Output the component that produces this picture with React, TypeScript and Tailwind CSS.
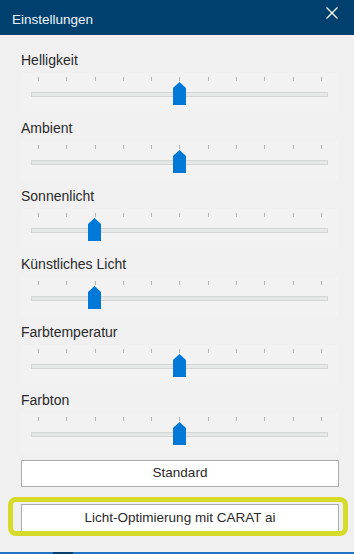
import React from 'react';

// Einstellungs-Slider
interface SliderItem {
  label: string;
  value: number; // 0..1
}

const sliders: SliderItem[] = [
  { label: 'Helligkeit', value: 0.5 },
  { label: 'Ambient', value: 0.5 },
  { label: 'Sonnenlicht', value: 0.2 },
  { label: 'Künstliches Licht', value: 0.2 },
  { label: 'Farbtemperatur', value: 0.5 },
  { label: 'Farbton', value: 0.5 },
];

const font = { fontFamily: '"Liberation Sans", Arial, sans-serif' };

const Slider = ({ item }: { item: SliderItem }) => {
  return (
    <div className="h-[68px] flex flex-col">
      <div className="h-[22px] text-[14px] leading-[17px] text-[#2a2a2a] pt-px">{item.label}</div>
      <div className="relative h-[39px] w-[317px] bg-[#f2f2f2]">
        {/* Ticks */}
        <div className="absolute left-[17px] top-[4px] w-[284px] h-[4px] flex justify-between">
          {Array.from({ length: 11 }).map((_, i) => (
            <div key={i} className="w-px h-[4px] bg-[#b8b8b8]" />
          ))}
        </div>
        {/* Track */}
        <div className="absolute left-[10px] top-[19px] w-[297px] h-[5px] bg-[#e6e8e8] border border-[#d4d6d6]" />
        {/* Thumb */}
        <svg
          className="absolute top-[9px]"
          style={{ left: 17 + item.value * 283 - 6.5 }}
          width="13"
          height="23"
          viewBox="0 0 13 23"
        >
          <polygon points="0,6 6.5,0 13,6 13,23 0,23" fill="#0078d7" />
        </svg>
      </div>
    </div>
  );
}

export default function App() {
  return (
    <div className="w-[354px] h-[554px] flex flex-col bg-[#f0f0f0] overflow-hidden" style={font}>
      {/* Titelleiste */}
      <div className="h-[35px] bg-[#00406f] flex items-start justify-between pl-[12px] pr-[16px] shrink-0">
        <span className="text-[13.5px] leading-[16px] text-[#eef3f8] pt-[12px]">Einstellungen</span>
        <svg width="12" height="12" viewBox="0 0 12 12" className="mt-[7px]">
          <path d="M0.5 0.5 L11.5 11.5 M11.5 0.5 L0.5 11.5" stroke="#ffffff" strokeWidth="1.3" />
        </svg>
      </div>

      <div className="pl-[21px] pr-[15px] pt-[16px] flex flex-col">
        {sliders.map((s) => (
          <Slider key={s.label} item={s} />
        ))}
        <button className="mt-px h-[27px] w-[318px] bg-white border border-[#adadad] text-[13.5px] text-[#2a2a2a]">
          Standard
        </button>
      </div>

      {/* Hervorgehobene Schaltfläche */}
      <div className="mt-[10px] ml-[8px] w-[340px] h-[39px] border-[5px] border-[#d5da2b] rounded-[8px] overflow-hidden pl-[8px] pr-[4px] pt-[2px] shrink-0">
        <button className="w-[318px] h-[30px] bg-white border border-b-0 border-[#adadad] text-[13.5px] text-[#2a2a2a] pb-[3px]">
          Licht-Optimierung mit CARAT ai
        </button>
      </div>

      <div className="flex-1" />
      <div className="h-[2px] bg-[#1f74c4] flex shrink-0">
        <div className="ml-[53px] w-[20px] h-full bg-[#003f70]" />
      </div>
    </div>
  );
}
